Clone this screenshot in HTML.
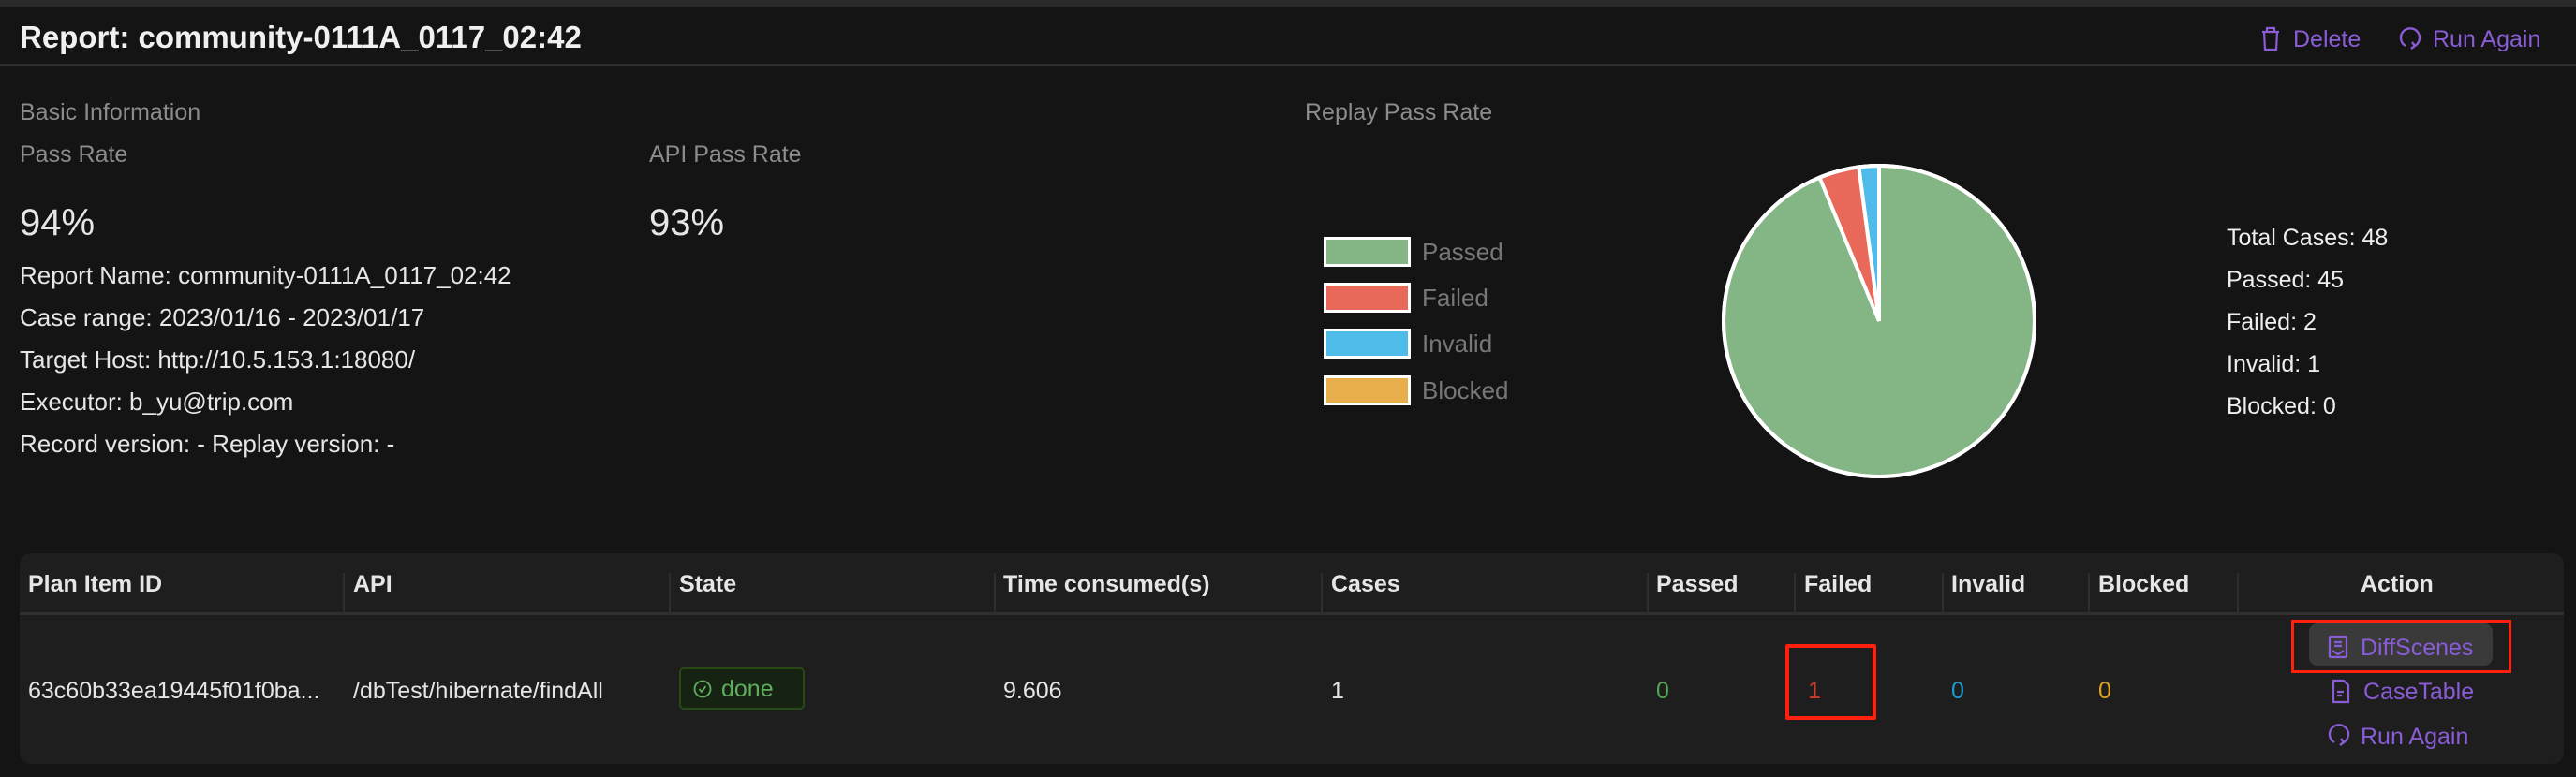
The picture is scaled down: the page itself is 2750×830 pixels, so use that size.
<!DOCTYPE html>
<html><head><meta charset="utf-8"><style>
*{margin:0;padding:0;box-sizing:border-box}
body{width:2750px;height:830px;background:#141414;font-family:"Liberation Sans",sans-serif;position:relative;overflow:hidden;color:#e6e6e6}
.a{position:absolute;white-space:nowrap;line-height:1}
.p{color:#8a5cd6}
.lg{position:absolute;left:1413px;width:93px;height:32px;border:3px solid #fff}
.lt{position:absolute;left:1518px;font-size:26px;color:#777;line-height:1}
.st{left:2377px;font-size:25px;color:#eee}
.h{top:612px;font-size:25px;font-weight:bold;color:#e6e6e6}
.d{position:absolute;width:2px;background:#2e2e2e;top:612px;height:44px}
.c{top:726px;font-size:25px;color:#e6e6e6}
.i{font-size:26px}
</style></head><body>
<div class="a" style="left:0;top:0;width:2750px;height:7px;background:#2a2a2a"></div>
<div class="a" style="left:21px;top:23px;font-size:33px;font-weight:bold;color:#f0f0f0">Report: community-0111A_0117_02:42</div>
<svg class="a" style="left:2413px;top:27px" width="22" height="28" viewBox="0 0 22 28" fill="none" stroke="#8a5cd6" stroke-width="2.2"><path d="M2 7h18M7 7V3h8v4M4 7l1 19h12l1-19"/></svg>
<div class="a p" style="left:2448px;top:30px;font-size:25px">Delete</div>
<svg class="a" style="left:2560px;top:27px" width="26" height="30" viewBox="0 0 26 30" fill="none" stroke="#8a5cd6" stroke-width="2.4"><path d="M8 22A10 10 0 1 1 18 22"/><path d="M15 18l3 4-4 3"/></svg>
<div class="a p" style="left:2597px;top:30px;font-size:25px">Run Again</div>
<div class="a" style="left:0;top:68px;width:2750px;height:2px;background:#2e2e2e"></div>

<div class="a" style="left:21px;top:108px;font-size:25px;color:#8c8c8c">Basic Information</div>
<div class="a" style="left:21px;top:153px;font-size:25px;color:#8c8c8c">Pass Rate</div>
<div class="a" style="left:693px;top:153px;font-size:25px;color:#8c8c8c">API Pass Rate</div>
<div class="a" style="left:21px;top:218px;font-size:40px;color:#e6e6e6">94%</div>
<div class="a" style="left:693px;top:218px;font-size:40px;color:#e6e6e6">93%</div>
<div class="a i" style="left:21px;top:281px">Report Name: community-0111A_0117_02:42</div>
<div class="a i" style="left:21px;top:326px">Case range: 2023/01/16 - 2023/01/17</div>
<div class="a i" style="left:21px;top:371px">Target Host: http://10.5.153.1:18080/</div>
<div class="a i" style="left:21px;top:416px">Executor: b_yu@trip.com</div>
<div class="a i" style="left:21px;top:461px">Record version: - Replay version: -</div>

<div class="a" style="left:1393px;top:108px;font-size:25px;color:#8c8c8c">Replay Pass Rate</div>
<div class="lg" style="top:253px;background:#83b585"></div><div class="lt" style="top:256px">Passed</div>
<div class="lg" style="top:302px;background:#e8695a"></div><div class="lt" style="top:305px">Failed</div>
<div class="lg" style="top:351px;background:#4fbbe8"></div><div class="lt" style="top:354px">Invalid</div>
<div class="lg" style="top:401px;background:#e8ae4c"></div><div class="lt" style="top:404px">Blocked</div>

<svg class="a" style="left:1836px;top:173px" width="340" height="340" viewBox="-170 -170 340 340">
<circle r="166" fill="#83b585" stroke="#fff" stroke-width="4"/>
<path d="M0 0L0 -166A166 166 0 0 0 -21.7 -164.6Z" fill="#4fbbe8" stroke="#fff" stroke-width="4"/>
<path d="M0 0L-21.7 -164.6A166 166 0 0 0 -63.5 -153.4Z" fill="#e8695a" stroke="#fff" stroke-width="4"/>
<circle r="166" fill="none" stroke="#fff" stroke-width="4"/>
</svg>

<div class="a st" style="top:242px">Total Cases: 48</div>
<div class="a st" style="top:287px">Passed: 45</div>
<div class="a st" style="top:332px">Failed: 2</div>
<div class="a st" style="top:377px">Invalid: 1</div>
<div class="a st" style="top:422px">Blocked: 0</div>

<div class="a" style="left:21px;top:591px;width:2716px;height:225px;background:#1e1e1e;border-radius:12px"></div>
<div class="a" style="left:21px;top:654px;width:2716px;height:3px;background:#303030"></div>
<div class="d" style="left:366px"></div><div class="d" style="left:714px"></div><div class="d" style="left:1061px"></div>
<div class="d" style="left:1410px"></div><div class="d" style="left:1758px"></div><div class="d" style="left:1915px"></div>
<div class="d" style="left:2073px"></div><div class="d" style="left:2229px"></div><div class="d" style="left:2388px"></div>
<div class="a h" style="left:30px">Plan Item ID</div>
<div class="a h" style="left:377px">API</div>
<div class="a h" style="left:725px">State</div>
<div class="a h" style="left:1071px">Time consumed(s)</div>
<div class="a h" style="left:1421px">Cases</div>
<div class="a h" style="left:1768px">Passed</div>
<div class="a h" style="left:1926px">Failed</div>
<div class="a h" style="left:2083px">Invalid</div>
<div class="a h" style="left:2240px">Blocked</div>
<div class="a h" style="left:2520px">Action</div>

<div class="a c" style="left:30px">63c60b33ea19445f01f0ba...</div>
<div class="a c" style="left:377px">/dbTest/hibernate/findAll</div>
<div class="a" style="left:725px;top:713px;width:134px;height:45px;background:#162312;border:2px solid #274916;border-radius:5px"></div>
<svg class="a" style="left:740px;top:726px" width="20" height="20" viewBox="0 0 20 20" fill="none" stroke="#5fae5f" stroke-width="1.8"><circle cx="10" cy="10" r="8.5"/><path d="M6.5 10l2.5 3 4.5-6"/></svg>
<div class="a" style="left:770px;top:724px;font-size:25px;color:#5fae5f">done</div>
<div class="a c" style="left:1071px">9.606</div>
<div class="a c" style="left:1421px">1</div>
<div class="a c" style="left:1768px;color:#52a552">0</div>
<div class="a c" style="left:1930px;color:#d03a2a">1</div>
<div class="a" style="left:1906px;top:688px;width:97px;height:81px;border:4px solid #ff2010;border-radius:2px"></div>
<div class="a c" style="left:2083px;color:#1d9bd1">0</div>
<div class="a c" style="left:2240px;color:#e0a020">0</div>

<div class="a" style="left:2465px;top:666px;width:196px;height:45px;background:#3a3a3a;border-radius:9px"></div>
<div class="a" style="left:2446px;top:662px;width:235px;height:57px;border:3px solid #ff2010"></div>
<svg class="a" style="left:2485px;top:678px" width="22" height="26" viewBox="0 0 22 26" fill="none" stroke="#8a5cd6" stroke-width="2.2"><rect x="2" y="2" width="18" height="22" rx="1"/><path d="M7 8h8M7 12h8M5 17l6 4 6-4"/></svg>
<div class="a p" style="left:2520px;top:680px;font-size:25px">DiffScenes</div>
<svg class="a" style="left:2489px;top:725px" width="20" height="27" viewBox="0 0 20 27" fill="none" stroke="#8a5cd6" stroke-width="2.2"><path d="M2 2h11l5 5v18H2Z"/><path d="M6 14h7M6 18h5"/></svg>
<div class="a p" style="left:2523px;top:727px;font-size:25px">CaseTable</div>
<svg class="a" style="left:2484px;top:771px" width="26" height="30" viewBox="0 0 26 30" fill="none" stroke="#8a5cd6" stroke-width="2.4"><path d="M8 22A10 10 0 1 1 18 22"/><path d="M15 18l3 4-4 3"/></svg>
<div class="a p" style="left:2520px;top:775px;font-size:25px">Run Again</div>
</body></html>
